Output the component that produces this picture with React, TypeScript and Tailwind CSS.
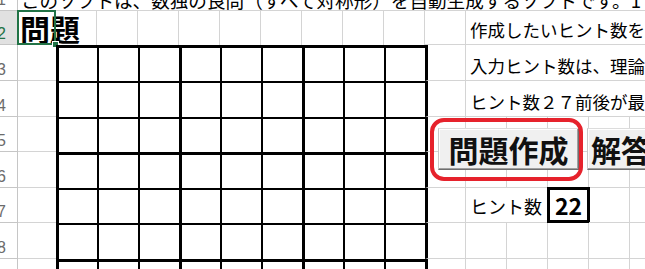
import type { ReactNode } from "react";

// Rows 1..9 of the sheet; row 1 is scrolled so only its bottom 11px show.
const ROWS = [1, 2, 3, 4, 5, 6, 7, 8, 9];
const COLS = Array.from({ length: 16 }, (_, i) => i); // 0 = A ... 15 = P

const ROW_HEIGHT: Record<number, string> = {
  1: "h-[11px]",
  2: "h-[34px]",
  3: "h-[36px]",
  4: "h-[36px]",
  5: "h-[35px]",
  6: "h-[36px]",
  7: "h-[35px]",
  8: "h-[36px]",
  9: "h-[36px]",
};

/** Which cells have text spilling over their right neighbours. */
function spillsOver(row: number, col: number): boolean {
  if (row === 1) return true;
  if (row >= 2 && row <= 4 && col >= 11) return true;
  return row === 7 && col === 11;
}

/** Border classes for a sheet cell: gray gridlines plus the sudoku frame. */
function cellBorders(row: number, col: number): string {
  const sudokuRow = row >= 3;
  const sudokuCol = col >= 1 && col <= 9;

  if (row === 1) return "border-b border-b-[#d4d4d4]";

  if (sudokuRow && sudokuCol) {
    const i = row - 3;
    const j = col - 1;
    const top = i % 3 === 0 ? "border-t-[3px]" : "border-t-2";
    const left = j % 3 === 0 ? "border-l-[3px]" : "border-l-2";
    return `${top} ${left} border-black`;
  }
  if (row === 2 && sudokuCol) return "border-r border-r-[#d4d4d4]";
  if (sudokuRow && col === 0) return "border-b border-b-[#d4d4d4]";
  if (sudokuRow && col === 10) {
    return "border-l-[3px] border-l-black border-r border-r-[#d4d4d4] border-b border-b-[#d4d4d4]";
  }
  if (spillsOver(row, col)) return "border-b border-b-[#d4d4d4]";
  return "border-r border-b border-[#d4d4d4]";
}

function SheetText({ children, className }: { children: ReactNode; className: string }) {
  return <span className={`whitespace-nowrap leading-none ${className}`}>{children}</span>;
}

function cellContent(row: number, col: number): ReactNode {
  const key = `${row}-${col}`;
  switch (key) {
    case "1-0":
      return (
        <SheetText className="pl-[3px] text-[18.6px] text-black">
          このソフトは、数独の良問（すべて対称形）を自動生成するソフトです。1
        </SheetText>
      );
    case "2-0":
      return (
        <>
          <SheetText className="pb-[1px] pl-[2px] text-[30px] font-bold text-black">問題</SheetText>
          <div className="pointer-events-none absolute -top-px -left-px -right-px -bottom-px border-2 border-[#217346]" />
          <div className="absolute -right-[4px] -bottom-[4px] h-[7px] w-[7px] border border-white bg-[#217346]" />
        </>
      );
    case "2-11":
      return (
        <SheetText className="pb-[6px] pl-[4px] text-[17.5px] text-black">
          作成したいヒント数を入力してください。
        </SheetText>
      );
    case "3-11":
      return (
        <SheetText className="pb-[6px] pl-[4px] text-[17.5px] text-black">
          入力ヒント数は、理論上の最小値以上にしてください。
        </SheetText>
      );
    case "4-11":
      return (
        <SheetText className="pb-[6px] pl-[4px] text-[17.5px] text-black">
          ヒント数２７前後が最適です。
        </SheetText>
      );
    case "7-11":
      return (
        <SheetText className="pb-[7px] pl-[4px] text-[18px] text-black">ヒント数</SheetText>
      );
    case "7-13":
      return (
        <div className="absolute -top-px -left-px -right-[2px] -bottom-px flex items-center justify-center border-[3px] border-black bg-white">
          <span className="text-[23px] leading-none font-bold text-black">22</span>
        </div>
      );
    default:
      return null;
  }
}

function RowHeader({ row }: { row: number }) {
  const active = row === 2;
  return (
    <div
      className={`flex w-[18px] shrink-0 items-end overflow-hidden border-r border-b border-[#c6c6c6] pb-[2px] ${
        active ? "bg-[#e1e1e1] text-[#217346]" : "bg-white text-[#6b6b6b]"
      }`}
    >
      <span className="-ml-[3px] font-['Liberation_Sans',sans-serif] text-[16px] leading-none">{row}</span>
    </div>
  );
}

function SheetRow({ row }: { row: number }) {
  return (
    <div className={`flex ${ROW_HEIGHT[row]}`}>
      <RowHeader row={row} />
      {COLS.map((col) => (
        <div
          className={`relative flex shrink-0 items-end ${col === 0 ? "w-[38px]" : "w-[41px]"} ${cellBorders(row, col)}`}
          key={col}
        >
          {cellContent(row, col)}
        </div>
      ))}
    </div>
  );
}

function FormButton({ label, className }: { label: string; className: string }) {
  return (
    <button
      className={`absolute top-[128px] flex h-[42px] items-center justify-center border border-t-[#dcdcdc] border-l-[#c8c8c8] border-r-[#6f6f6f] border-b-[#6f6f6f] bg-[#f0f0f0] text-[30px] leading-none font-bold text-[#111] shadow-[inset_-1px_-1px_0_#a0a0a0,inset_1px_1px_0_#ffffff] ${className}`}
      type="button"
    >
      <span className="whitespace-nowrap">{label}</span>
    </button>
  );
}

export default function App() {
  return (
    <div className="relative h-[269px] w-[645px] overflow-hidden bg-white font-['Noto_Sans_CJK_JP','Noto_Sans',sans-serif]">
      {ROWS.map((row) => (
        <SheetRow key={row} row={row} />
      ))}

      {/* floating form controls drawn over rows 5–6 */}
      <FormButton className="left-[438px] w-[141px]" label="問題作成" />
      <FormButton className="left-[587px] w-[128px]" label="解答作成" />
      <div className="pointer-events-none absolute top-[118px] left-[430px] h-[63px] w-[153px] rounded-[14px] border-4 border-[#e6222c]" />
    </div>
  );
}
